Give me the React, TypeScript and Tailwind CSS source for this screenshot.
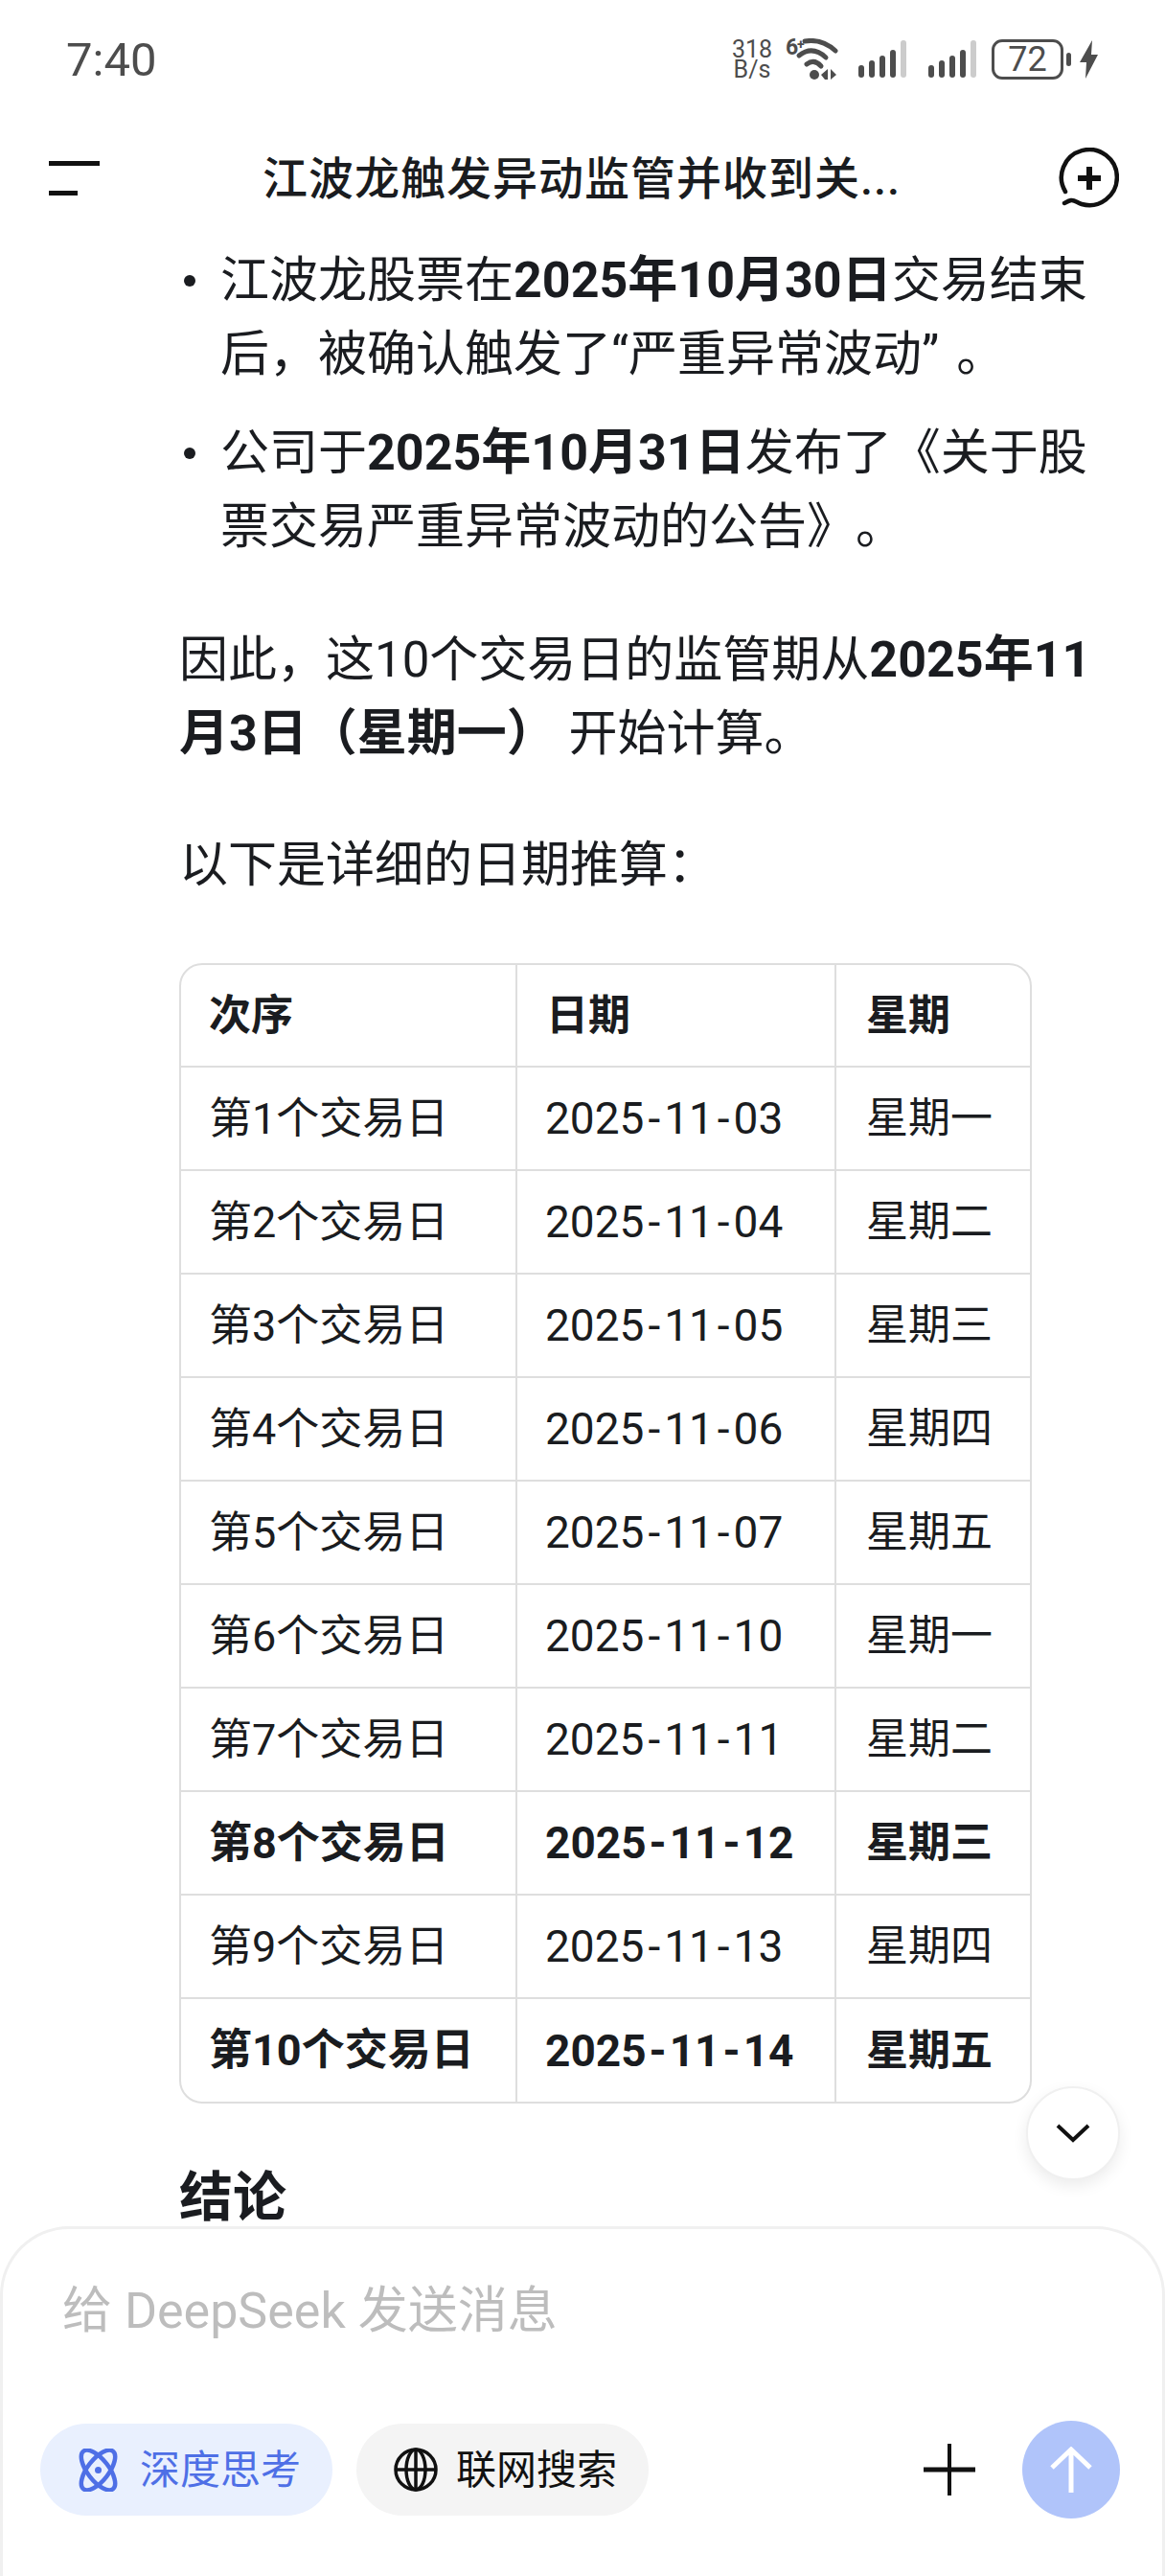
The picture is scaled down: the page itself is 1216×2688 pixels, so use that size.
import { ReactNode } from 'react';

const rows = [
  ['第1个交易日', '2025-11-03', '星期一'],
  ['第2个交易日', '2025-11-04', '星期二'],
  ['第3个交易日', '2025-11-05', '星期三'],
  ['第4个交易日', '2025-11-06', '星期四'],
  ['第5个交易日', '2025-11-07', '星期五'],
  ['第6个交易日', '2025-11-10', '星期一'],
  ['第7个交易日', '2025-11-11', '星期二'],
  ['第8个交易日', '2025-11-12', '星期三', 'bold'],
  ['第9个交易日', '2025-11-13', '星期四'],
  ['第10个交易日', '2025-11-14', '星期五', 'bold'],
];

function SignalBars() {
  return (
    <svg width="50" height="40" viewBox="0 0 50 40">
      <rect x="0" y="26" width="6" height="13" rx="3" fill="#4d4d4d" />
      <rect x="11" y="21" width="6" height="18" rx="3" fill="#4d4d4d" />
      <rect x="22" y="16" width="6" height="23" rx="3" fill="#4d4d4d" />
      <rect x="33" y="10" width="6" height="29" rx="3" fill="#4d4d4d" />
      <rect x="44" y="0" width="6" height="39" rx="3" fill="#cccccc" />
    </svg>
  );
}

function StatusBar() {
  return (
    <div className="flex h-[124px] items-center justify-between pl-[69px] pr-[70px] text-[#4d4d4d]">
      <span className="text-[49px] leading-none">7:40</span>
      <div className="flex items-center">
        <div className="flex w-[46px] flex-col items-center text-[25px] leading-[21px]">
          <span>318</span>
          <span>B/s</span>
        </div>
        <svg className="ml-[12px]" width="60" height="44" viewBox="0 0 60 44">
          <text x="0" y="17" fontSize="23" fontWeight="700" fill="#4d4d4d" fontFamily="Roboto, sans-serif">6</text>
          <text x="12" y="11" fontSize="14" fontWeight="700" fill="#4d4d4d" fontFamily="Roboto, sans-serif">+</text>
          <path d="M20 3 Q38 0 52 13" fill="none" stroke="#4d4d4d" strokeWidth="5" strokeLinecap="round" />
          <path d="M14 18 Q28 7 42 20" fill="none" stroke="#4d4d4d" strokeWidth="5" strokeLinecap="round" />
          <path d="M22 27 Q30 21 37 29" fill="none" stroke="#4d4d4d" strokeWidth="5" strokeLinecap="round" />
          <circle cx="30" cy="38" r="5" fill="#4d4d4d" />
          <path d="M44 32 V43 H41 L37 38 Z M47 32 L53 38 L47 43 Z" fill="#4d4d4d" />
        </svg>
        <div className="ml-[16px]">
          <SignalBars />
        </div>
        <div className="ml-[23px]">
          <SignalBars />
        </div>
        <div className="ml-[16px] flex h-[42px] w-[75px] items-center justify-center rounded-[11px] border-[3px] border-[#4d4d4d] text-[36px] leading-none">
          72
        </div>
        <div className="ml-[3px] h-[14px] w-[5px] rounded-full bg-[#4d4d4d]" />
        <svg className="ml-[9px]" width="19" height="40" viewBox="0 0 19 40">
          <path d="M13 0 L0 23 H7 L6 40 L19 15 H12 Z" fill="#4d4d4d" />
        </svg>
      </div>
    </div>
  );
}

function Header() {
  return (
    <div className="relative flex h-[124px] items-center pl-[51px] pr-[48px]">
      <div className="flex w-[53px] flex-col gap-[26px]">
        <div className="h-[5px] w-[53px] bg-[#111]" />
        <div className="h-[5px] w-[30px] bg-[#111]" />
      </div>
      <div className="ml-[170px] flex-1 whitespace-nowrap text-[47px] font-medium leading-none tracking-[1px] text-[#1a1c20]">
        江波龙触发异动监管并收到关...
      </div>
      <svg width="64" height="64" viewBox="0 0 64 64" fill="none" stroke="#111" strokeWidth="4.5" strokeLinecap="round">
        <path d="M8 46 A29 29 0 1 1 25 59 C20 57.5 18 54.5 14 55 C11 55.5 9 57 7 58" />
        <path d="M33 20 V44 M21 32 H45" strokeWidth="6" strokeLinecap="butt" />
      </svg>
    </div>
  );
}

function B({ children }: { children: ReactNode }) {
  return <strong className="text-[52px] font-bold">{children}</strong>;
}

function Bullet({ children }: { children: ReactNode }) {
  return (
    <li className="relative pl-[43px]">
      <span className="absolute left-[5px] top-[33px] size-[12px] rounded-full bg-[#1a1c20]" />
      {children}
    </li>
  );
}

// the hyphens in the dates sit wider than the font's own
function DateText({ value, bold }: { value: string; bold: boolean }) {
  const [y, m, d] = value.split('-');
  const gap = bold ? 'mx-[3px]' : 'mx-[4px]';
  return (
    <span className="text-[46px]">
      {y}
      <span className={gap}>-</span>
      {m}
      <span className={gap}>-</span>
      {d}
    </span>
  );
}

function DataTable() {
  return (
    <div className="mt-[64px] w-[890px] overflow-hidden rounded-[24px] border-[2px] border-[#dedede]">
      <table className="w-full table-fixed border-collapse text-[44px] leading-none">
        <colgroup>
          <col className="w-[350px]" />
          <col className="w-[333px]" />
          <col />
        </colgroup>
        <tbody>
          <tr className="h-[106px] font-bold">
            <td className="pl-[29px]">次序</td>
            <td className="border-l-[2px] border-[#dedede] pl-[30px]">日期</td>
            <td className="border-l-[2px] border-[#dedede] pl-[31px]">星期</td>
          </tr>
          {rows.map((row) => (
            <tr key={row[0]} className={row[3] ? 'h-[108px] font-bold' : 'h-[108px]'}>
              <td className="border-t-[2px] border-[#dedede] pl-[29px] text-[45px]">{row[0]}</td>
              <td className="border-l-[2px] border-t-[2px] border-[#dedede] pl-[29px]">
                <DateText value={row[1]} bold={!!row[3]} />
              </td>
              <td className="border-l-[2px] border-t-[2px] border-[#dedede] pl-[31px]">{row[2]}</td>
            </tr>
          ))}
        </tbody>
      </table>
    </div>
  );
}

function Composer() {
  return (
    <div className="h-[365px] shrink-0 rounded-t-[72px] border-x-[3px] border-t-[3px] border-[#f0f0f0] bg-white pl-[39px] pr-[42px]">
      <div className="pl-[23px] pt-[56px] text-[52px] leading-[60px] text-[#bdbdbd]">给 DeepSeek 发送消息</div>
      <div className="mt-[84px] flex items-center">
        <div className="flex h-[96px] w-[305px] items-center gap-[21px] rounded-full bg-[#e9f0fe] pl-[38px] text-[42px] text-[#4e6fe6]">
          <svg width="45" height="45" viewBox="0 0 45 45" fill="none" stroke="#4e6fe6" strokeWidth="4.5">
            <ellipse cx="22.5" cy="22.5" rx="11" ry="25" transform="rotate(-38 22.5 22.5)" />
            <ellipse cx="22.5" cy="22.5" rx="11" ry="25" transform="rotate(38 22.5 22.5)" />
            <circle cx="22.5" cy="22.5" r="3.5" fill="#4e6fe6" stroke="none" />
          </svg>
          深度思考
        </div>
        <div className="ml-[25px] flex h-[96px] w-[305px] items-center gap-[19px] rounded-full bg-[#f4f4f4] pl-[39px] text-[42px] text-[#111]">
          <svg width="46" height="46" viewBox="0 0 46 46" fill="none" stroke="#111" strokeWidth="3.5">
            <circle cx="23" cy="23" r="21" />
            <ellipse cx="23" cy="23" rx="10" ry="21" />
            <path d="M23 2 V44 M2 23 H44" />
          </svg>
          联网搜索
        </div>
        <svg className="ml-[287px]" width="54" height="54" viewBox="0 0 54 54" stroke="#111">
          <path d="M27 0 V54" strokeWidth="4" />
          <path d="M0 27 H54" strokeWidth="5" />
        </svg>
        <div className="ml-[49px] flex size-[102px] items-center justify-center rounded-full bg-[#b0c4fa]">
          <svg width="46" height="48" viewBox="0 0 46 48" fill="none" stroke="#fff" strokeWidth="5" strokeLinejoin="miter">
            <path d="M23 48 V3 M3 22 L23 3 L43 22" />
          </svg>
        </div>
      </div>
    </div>
  );
}

export default function App() {
  return (
    <div className="relative flex h-[2688px] w-[1216px] flex-col overflow-hidden bg-white font-['Roboto','Noto_Sans_CJK_SC',sans-serif] text-[#1a1c20] [text-spacing-trim:space-all]">
      <StatusBar />
      <Header />
      <div className="min-h-0 flex-1 overflow-hidden pl-[187px] pr-[70px] pt-[6px] text-[51px] leading-[77px]">
        <ul className="flex flex-col gap-[26px]">
          <Bullet>
            江波龙股票在<B>2025年10月30日</B>交易结束后，被确认触发了“严重异常波动<span className="mr-[18px]">”</span>。
          </Bullet>
          <Bullet>
            公司于<B>2025年10月31日</B>发布了《关于股票交易严重异常波动的公告》。
          </Bullet>
        </ul>
        <p className="mt-[62px]">
          因此，这10个交易日的监管期从<B>2025年11月3日（星期一）</B> 开始计算。
        </p>
        <p className="mt-[60px]">以下是详细的日期推算：</p>
        <DataTable />
        <h3 className="mt-[60px] text-[56px] font-bold leading-[76px]">结论</h3>
      </div>
      <Composer />
      <button className="absolute left-[1071px] top-[2177px] flex size-[98px] items-center justify-center rounded-full border-[2px] border-[#f0f0f0] bg-white shadow-[0_6px_16px_rgba(0,0,0,0.08)]">
        <svg width="36" height="20" viewBox="0 0 36 20" fill="none" stroke="#111" strokeWidth="4">
          <path d="M2 2 L18 17 L34 2" />
        </svg>
      </button>
    </div>
  );
}
